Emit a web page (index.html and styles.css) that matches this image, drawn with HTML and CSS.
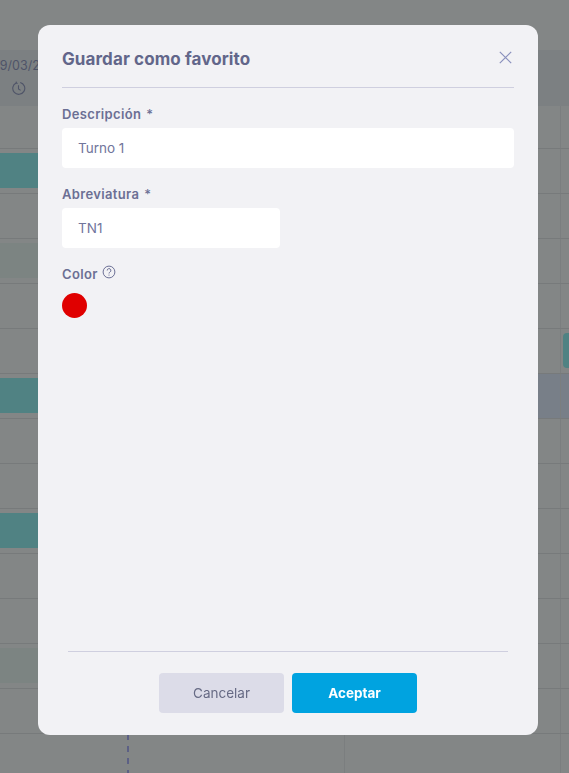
FILE: index.html
```html
<!DOCTYPE html>
<html lang="es">
<head>
<meta charset="utf-8">
<title>Guardar como favorito</title>
<link rel="stylesheet" href="styles.css">
</head>
<body>
<div class="board">
  <div class="board-head">
    <div class="day-head">
      <span class="date">19/03/2024</span>
      <svg class="clock" width="15" height="15" viewBox="0 0 15 15" fill="none" stroke="#4f5468" stroke-width="1.1"><path d="M9.2 1.5A6 6 0 1 1 5.2 1.9"/><path d="M5.4 0.6 5.2 2.1 6.6 2.6"/><path d="M7.5 4.2V8L9.6 9.4"/></svg>
    </div>
  </div>
  <div class="row"><div class="cell"></div><div class="cell"></div><div class="cell"></div></div>
  <div class="row"><div class="cell"><div class="bar teal"></div></div><div class="cell"></div><div class="cell"></div></div>
  <div class="row"><div class="cell"></div><div class="cell"></div><div class="cell"></div></div>
  <div class="row"><div class="cell"><div class="bar faint"></div></div><div class="cell"></div><div class="cell"></div></div>
  <div class="row"><div class="cell"></div><div class="cell"></div><div class="cell"></div></div>
  <div class="row"><div class="cell"></div><div class="cell"></div><div class="cell"><div class="bar teal side"></div></div></div>
  <div class="row blue"><div class="cell"><div class="bar teal"></div></div><div class="cell"></div><div class="cell"></div></div>
  <div class="row"><div class="cell"></div><div class="cell"></div><div class="cell"></div></div>
  <div class="row"><div class="cell"></div><div class="cell"></div><div class="cell"></div></div>
  <div class="row"><div class="cell"><div class="bar teal"></div></div><div class="cell"></div><div class="cell"></div></div>
  <div class="row"><div class="cell"></div><div class="cell"></div><div class="cell"></div></div>
  <div class="row"><div class="cell"></div><div class="cell"></div><div class="cell"></div></div>
  <div class="row"><div class="cell"><div class="bar faint"></div></div><div class="cell"></div><div class="cell"></div></div>
  <div class="row"><div class="cell"></div><div class="cell"></div><div class="cell"></div></div>
  <div class="row last"><div class="cell today"></div><div class="cell"></div><div class="cell"></div></div>
</div>

<section class="modal" role="dialog" aria-labelledby="modal-title">
  <header class="modal-head">
    <h1 id="modal-title" class="modal-title">Guardar como favorito</h1>
    <button class="close" type="button" aria-label="Cerrar">
      <svg width="13" height="13" viewBox="0 0 13 13" fill="none" stroke="#8a90bd" stroke-width="1.2"><path d="M.8.8 12.2 12.2M12.2.8.8 12.2"/></svg>
    </button>
  </header>
  <div class="modal-body">
    <div class="field">
      <label class="label">Descripción <span class="req">*</span></label>
      <div class="input">Turno 1</div>
    </div>
    <div class="field">
      <label class="label">Abreviatura <span class="req">*</span></label>
      <div class="input short">TN1</div>
    </div>
    <div class="field color-field">
      <label class="label">Color
        <svg class="help" width="14" height="14" viewBox="0 0 14 14" fill="none" stroke="#6d7196" stroke-width="1"><circle cx="7" cy="7" r="5.9"/><path d="M5.2 5.5A1.85 1.85 0 1 1 7.9 7.1C7.2 7.5 7 7.8 7 8.5"/><path d="M7 9.6v1"/></svg>
      </label>
      <div class="swatch"></div>
    </div>
  </div>
  <footer class="modal-foot">
    <button class="btn cancel" type="button">Cancelar</button>
    <button class="btn accept" type="button">Aceptar</button>
  </footer>
</section>
</body>
</html>
```

FILE: styles.css
```css
* { box-sizing: border-box; }
html, body { margin: 0; height: 100%; }
body {
  background: #838686;
  font-family: Inter, "Open Sans", "Liberation Sans", sans-serif;
  overflow: hidden;
}
.board { height: 773px; padding-top: 50px; overflow: hidden; }
.board-head { height: 56px; background: #7c8082; }
.day-head {
  width: 100px;
  margin-left: -32px;
  padding-top: 8px;
  display: flex;
  flex-direction: column;
  align-items: center;
  gap: 7px;
  color: #4f5468;
  font-size: 12.5px;
  line-height: 16px;
}
.date { padding-left: 22px; white-space: nowrap; }
.clock { display: block; margin-left: 1px; }
.row {
  display: grid;
  grid-template-columns: 345px 216px 1fr;
  height: 45px;
  border-bottom: 1px solid #777a7b;
}
.board-head + .row { height: 43px; }
.row.blue { background: #787f88; }
.row.blue .cell:first-child { background: #838686; }
.cell { border-right: 1px solid #7b7e7f; padding-top: 4px; }
.cell:last-child { border-right: 0; }
.bar { height: 35px; }
.teal { background: #508283; }
.faint { background: #7c8482; }
.side { margin-left: 2px; border-radius: 4px 0 0 4px; }
.today {
  background: linear-gradient(#5c6085 50%, transparent 50%) 127px 0 / 2px 12px repeat-y;
}

.modal {
  position: fixed;
  left: 38px;
  top: 25px;
  width: 500px;
  height: 710px;
  background: #f2f2f5;
  border-radius: 12px;
  padding: 0 24px;
  display: flex;
  flex-direction: column;
}
.modal-head {
  height: 63px;
  flex: none;
  display: flex;
  align-items: center;
  justify-content: space-between;
  border-bottom: 1px solid #cfcfdf;
  padding-top: 6px;
}
.modal-title {
  margin: 0;
  font-size: 17px;
  font-weight: 700;
  letter-spacing: .1px;
  color: #62668a;
  line-height: 20px;
}
.close {
  display: flex;
  padding: 0;
  margin: 0 2px 4px 0;
  border: 0;
  background: none;
}
.modal-body {
  flex: 1;
  padding-top: 15px;
  display: flex;
  flex-direction: column;
  gap: 15px;
}
.field { display: flex; flex-direction: column; gap: 3px; }
.label {
  display: flex;
  align-items: center;
  gap: 4px;
  height: 22px;
  font-size: 13px;
  font-weight: 600;
  letter-spacing: .35px;
  color: #6b6f94;
}
.req { font-weight: 500; margin-left: 1px; }
.input {
  height: 40px;
  background: #fff;
  border-radius: 4px;
  padding: 0 16px;
  display: flex;
  align-items: center;
  font-size: 13.5px;
  color: #71759b;
}
.short { width: 218px; }
.color-field { gap: 8px; }
.help { margin: -5px 0 0 0; }
.swatch { width: 25px; height: 25px; border-radius: 50%; background: #e00000; }
.modal-foot {
  flex: none;
  height: 84px;
  margin: 0 6px;
  border-top: 1px solid #cfcfdf;
  display: flex;
  justify-content: center;
  gap: 8px;
  padding-top: 21px;
}
.btn {
  width: 125px;
  height: 40px;
  border: 0;
  border-radius: 4px;
  font-family: inherit;
  font-size: 13.5px;
}
.cancel { background: #dcdce8; color: #666a84; font-weight: 400; }
.accept { background: #00a3e0; color: #fff; font-weight: 700; }
```
